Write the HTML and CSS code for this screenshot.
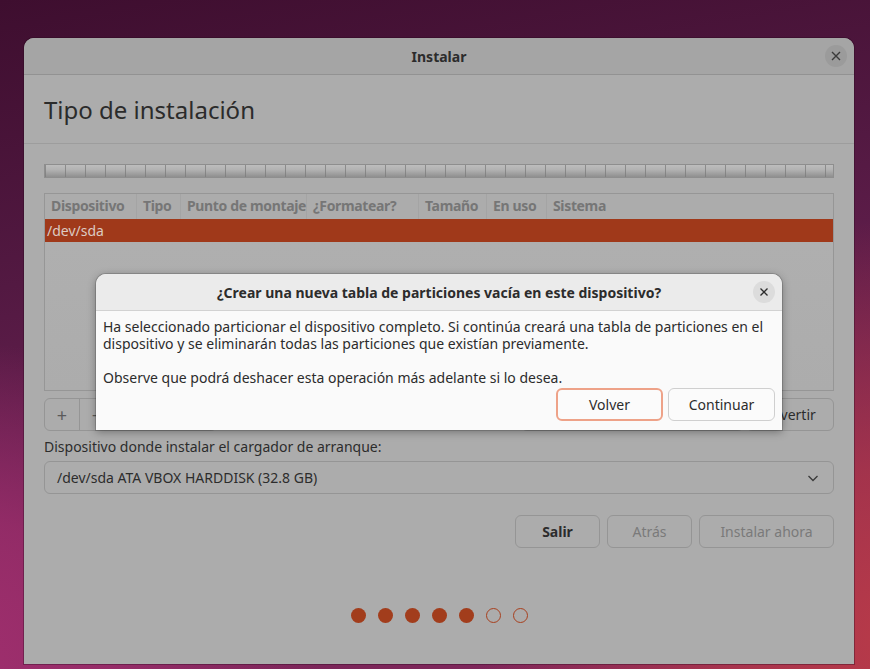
FILE: index.html
```html
<!DOCTYPE html>
<html lang="es">
<head>
<meta charset="utf-8">
<title>Instalar</title>
<link rel="stylesheet" href="styles.css">
</head>
<body>
<div class="desktop">
  <div class="window">
    <div class="titlebar">
      <span class="title">Instalar</span>
      <span class="close dim">
        <svg width="10" height="10" viewBox="0 0 10 10"><path d="M1 1L9 9M9 1L1 9" stroke="#3a3a3a" stroke-width="1.4"/></svg>
      </span>
    </div>
    <div class="header">Tipo de instalación</div>
    <div class="content">
      <div class="partbar"></div>
      <div class="table">
        <div class="thead">
          <span class="th c1">Dispositivo</span>
          <span class="th c2">Tipo</span>
          <span class="th c3">Punto de montaje</span>
          <span class="th c4">¿Formatear?</span>
          <span class="th c5">Tamaño</span>
          <span class="th c6">En uso</span>
          <span class="th c7">Sistema</span>
        </div>
        <div class="row selected">/dev/sda</div>
      </div>
      <div class="toolbar">
        <div class="group">
          <span class="tbtn">+</span>
          <span class="tbtn">−</span>
          <span class="tbtn wide"></span>
        </div>
        <div class="rightbtns">
          <span class="btn newtable"></span>
          <span class="btn revert">Revertir</span>
        </div>
      </div>
      <div class="label">Dispositivo donde instalar el cargador de arranque:</div>
      <div class="combo">
        <span>/dev/sda ATA VBOX HARDDISK (32.8 GB)</span>
        <svg width="12" height="8" viewBox="0 0 12 8"><path d="M1.5 2l4.5 4.5L10.5 2" fill="none" stroke="#3a3a3a" stroke-width="1.3"/></svg>
      </div>
      <div class="actions">
        <span class="btn salir">Salir</span>
        <span class="btn disabled atras">Atrás</span>
        <span class="btn disabled instalar">Instalar ahora</span>
      </div>
      <div class="dots">
        <span class="dot"></span><span class="dot"></span><span class="dot"></span><span class="dot"></span><span class="dot"></span><span class="dot empty"></span><span class="dot empty"></span>
      </div>
    </div>
  </div>

  <div class="dialog">
    <div class="dtitlebar">
      <span class="dtitle">¿Crear una nueva tabla de particiones vacía en este dispositivo?</span>
      <span class="close light">
        <svg width="10" height="10" viewBox="0 0 10 10"><path d="M1.5 1.5L8.5 8.5M8.5 1.5L1.5 8.5" stroke="#2e2e2e" stroke-width="1.3"/></svg>
      </span>
    </div>
    <div class="dbody">
      <p>Ha seleccionado particionar el dispositivo completo. Si continúa creará una tabla de particiones en el dispositivo y se eliminarán todas las particiones que existían previamente.</p>
      <p>Observe que podrá deshacer esta operación más adelante si lo desea.</p>
      <div class="dbuttons">
        <span class="dbtn focus">Volver</span>
        <span class="dbtn">Continuar</span>
      </div>
    </div>
  </div>
</div>
</body>
</html>
```

FILE: styles.css
```css
* { box-sizing: border-box; }
html, body { margin: 0; padding: 0; }
body {
  width: 870px;
  height: 669px;
  overflow: hidden;
  font-family: "Noto Sans", "Open Sans", sans-serif;
}
.desktop {
  position: relative;
  width: 870px;
  height: 669px;
  padding: 38px 0 0 24px;
  background:
    radial-gradient(ellipse 380px 320px at -60px 660px, #a02f6e 0%, rgba(160,47,110,0.75) 45%, rgba(160,47,110,0) 100%),
    radial-gradient(ellipse 420px 420px at 900px 640px, #b83a48 0%, rgba(184,58,72,0.7) 40%, rgba(184,58,72,0) 100%),
    linear-gradient(170deg, #3e0e2f 0%, #531942 35%, #672050 60%, #84285d 100%);
}
.window {
  width: 830px;
  height: 626px;
  background: #acacac;
  border-radius: 10px 10px 0 0;
  display: flex;
  flex-direction: column;
  box-shadow: 0 0 0 1px rgba(40,10,30,0.35);
}
.titlebar {
  position: relative;
  height: 37px;
  flex: none;
  background: #a5a5a5;
  border-radius: 10px 10px 0 0;
  border-bottom: 1px solid #929292;
  display: flex;
  align-items: center;
  justify-content: center;
}
.title {
  font-weight: 700;
  font-size: 14px;
  color: #2c2c2c;
}
.close {
  position: absolute;
  width: 22px;
  height: 22px;
  border-radius: 50%;
  display: flex;
  align-items: center;
  justify-content: center;
}
.close.dim { right: 7px; top: 7px; background: #9b9b9b; }
.header {
  flex: none;
  height: 69px;
  padding: 18px 0 0 20px;
  font-size: 24px;
  color: #2b2b2b;
  border-bottom: 1px solid #9d9d9d;
}
.content {
  flex: 1;
  padding: 20px 20px 0 20px;
  display: flex;
  flex-direction: column;
}
.partbar {
  height: 14px;
  border: 1px solid #8e8e8e;
  background:
    repeating-linear-gradient(90deg, rgba(120,120,120,0.7) 0 1px, transparent 1px 20px),
    linear-gradient(#bdbdbd 0%, #b2b2b2 40%, #8f8f8f 100%);
}
.table {
  margin-top: 15px;
  height: 198px;
  border: 1px solid #969696;
  background: linear-gradient(#b0b0b0, #acacac);
}
.thead {
  height: 25px;
  display: flex;
  align-items: center;
  background: #acacac;
}
.th {
  font-size: 14px;
  font-weight: 700;
  letter-spacing: -0.35px;
  color: #767676;
  height: 25px;
  line-height: 24px;
  padding: 0 0 0 6px;
  border-right: 1px solid #a4a4a4;
  white-space: nowrap;
}
.th.c1 { width: 92px; }
.th.c2 { width: 44px; }
.th.c3 { width: 126px; }
.th.c4 { width: 112px; }
.th.c5 { width: 68px; }
.th.c6 { width: 60px; }
.th.c7 { border-right: none; }
.row {
  height: 23px;
  line-height: 23px;
  font-size: 14px;
  padding-left: 2px;
}
.row.selected { background: #a0391a; color: #dccbc3; }
.toolbar {
  margin-top: 7px;
  height: 33px;
  display: flex;
  justify-content: space-between;
}
.group {
  display: flex;
  border: 1px solid #959595;
  border-radius: 6px;
  width: 173px;
}
.tbtn {
  width: 35px;
  display: flex;
  align-items: center;
  justify-content: center;
  font-size: 18px;
  color: #5a5a5a;
  border-right: 1px solid #959595;
}
.tbtn.wide { flex: 1; border-right: none; font-size: 14px; }
.rightbtns { display: flex; gap: 2px; }
.btn {
  display: flex;
  align-items: center;
  justify-content: center;
  border: 1px solid #959595;
  border-radius: 6px;
  font-size: 14px;
  color: #2c2c2c;
}
.newtable { width: 223px; }
.revert { width: 88px; }
.label {
  margin-top: 6px;
  font-size: 14px;
  line-height: 20px;
  color: #2c2c2c;
}
.combo {
  margin-top: 4px;
  height: 33px;
  border: 1px solid #959595;
  border-radius: 6px;
  display: flex;
  align-items: center;
  justify-content: space-between;
  padding: 0 14px 0 12px;
  font-size: 14px;
  color: #2c2c2c;
}
.actions {
  margin-top: 21px;
  display: flex;
  justify-content: flex-end;
  gap: 7px;
}
.actions .btn { height: 33px; }
.salir { width: 85px; font-weight: 700; }
.atras { width: 85px; }
.instalar { width: 135px; }
.btn.disabled { color: #7a7a7a; }
.dots {
  margin-top: 60px;
  display: flex;
  justify-content: center;
  gap: 12px;
}
.dot {
  width: 15px;
  height: 15px;
  border-radius: 50%;
  background: #a23d1c;
}
.dot.empty { background: transparent; border: 1.5px solid #a8401e; }

.dialog {
  position: absolute;
  left: 96px;
  top: 274px;
  width: 686px;
  height: 156px;
  background: #fafafa;
  border-radius: 10px 10px 0 0;
  box-shadow: 0 2px 8px rgba(0,0,0,0.35), 0 0 0 1px rgba(0,0,0,0.15);
  display: flex;
  flex-direction: column;
}
.dtitlebar {
  position: relative;
  flex: none;
  height: 37px;
  background: #ebebeb;
  border-radius: 10px 10px 0 0;
  border-bottom: 1px solid #d2d2d2;
  display: flex;
  align-items: center;
  justify-content: center;
}
.dtitle { font-weight: 700; font-size: 14px; color: #2c2c2c; }
.close.light { right: 7px; top: 7px; background: #dcdcdc; }
.dbody {
  flex: 1;
  padding: 7px 7px 0 7px;
  font-size: 14px;
  line-height: 17px;
  color: #2c2c2c;
}
.dbody p { margin: 0 0 17px 0; }
.dbody p + p { margin-bottom: 0; }
.dbuttons {
  margin-top: 2px;
  display: flex;
  justify-content: flex-end;
  gap: 5px;
}
.dbtn {
  width: 107px;
  height: 33px;
  border: 1px solid #cfcfcf;
  border-radius: 6px;
  display: flex;
  align-items: center;
  justify-content: center;
  background: #fbfbfb;
  font-size: 14px;
  color: #2c2c2c;
}
.dbtn.focus { border: 2px solid #eea288; }
```
